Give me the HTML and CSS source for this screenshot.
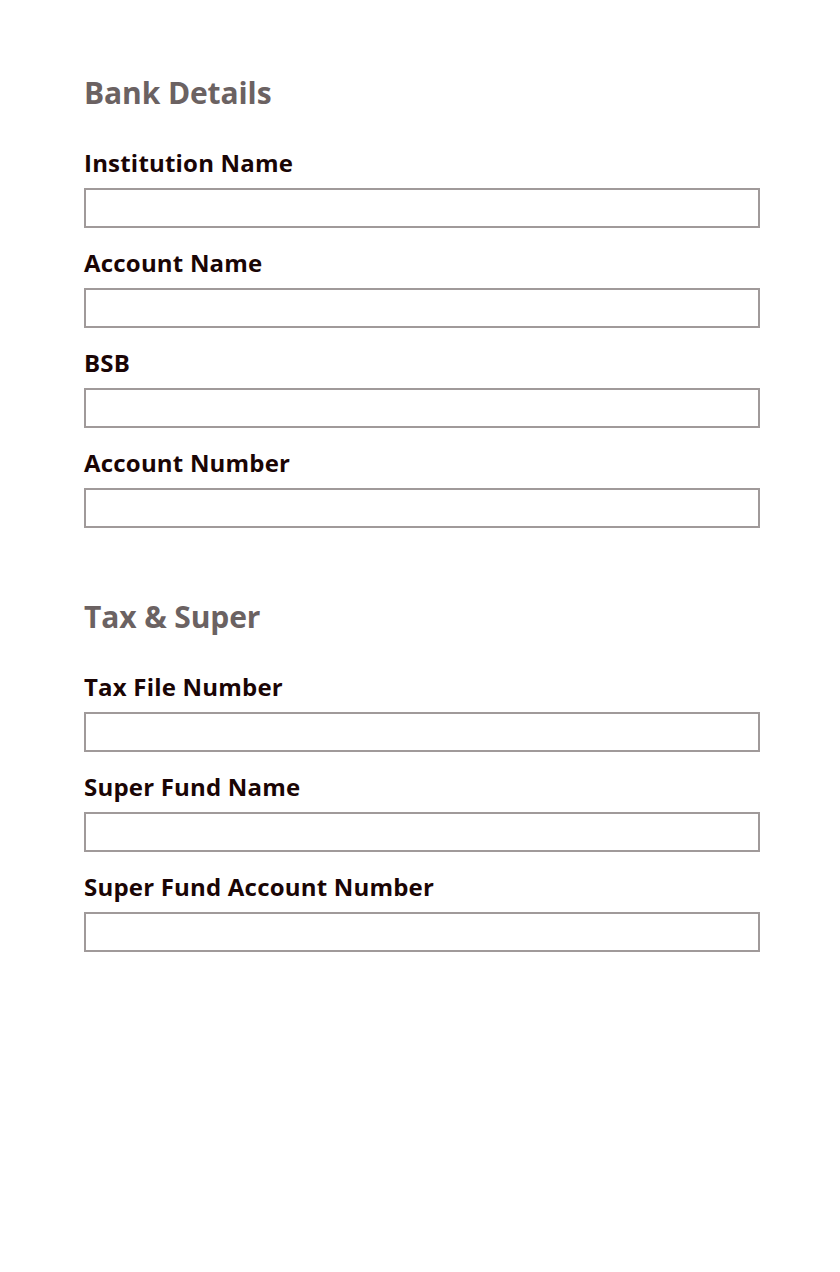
FILE: index.html
```html
<!DOCTYPE html>
<html lang="en">
<head>
    <meta charset="UTF-8">
    <title>Bank Details</title>
    <link rel="stylesheet" href="styles.css">
</head>
<body>
<div id="wrap">
    <div class="section">
        <h2>Bank Details</h2>
        <div class="field">
            <label for="institution">Institution Name</label>
            <input type="text" id="institution">
        </div>
        <div class="field">
            <label for="accName">Account Name</label>
            <input type="text" id="accName">
        </div>
        <div class="field">
            <label for="bsb">BSB</label>
            <input type="text" id="bsb">
        </div>
        <div class="field">
            <label for="accNumber">Account Number</label>
            <input type="text" id="accNumber">
        </div>
    </div>
    <div class="section">
        <h2>Tax &amp; Super</h2>
        <div class="field">
            <label for="tfn">Tax File Number</label>
            <input type="text" id="tfn">
        </div>
        <div class="field">
            <label for="superName">Super Fund Name</label>
            <input type="text" id="superName">
        </div>
        <div class="field">
            <label for="superNumber">Super Fund Account Number</label>
            <input type="text" id="superNumber">
        </div>
    </div>
</div>
</body>
</html>
```
FILE: styles.css
```css
* {
    margin: 0;
    padding: 0;
    box-sizing: border-box;
}

body {
    background: #fff;
    font-family: "Open Sans", "Noto Sans", sans-serif;
}

#wrap {
    width: 676px;
    margin-left: 84px;
    padding-top: 73px;
}

.section + .section {
    margin-top: 69px;
}

.section h2 {
    font-size: 30px;
    font-weight: 700;
    line-height: 40px;
    color: #6b6262;
    letter-spacing: -0.1px;
    margin-bottom: 33px;
}

.field {
    margin-bottom: 18px;
}

.field label {
    display: block;
    font-size: 24px;
    font-weight: 700;
    line-height: 34px;
    letter-spacing: 0.2px;
    color: #1a0505;
    margin-bottom: 8px;
}

.field input {
    display: block;
    width: 100%;
    height: 40px;
    border: 2px solid #a09a9a;
    background: #fff;
    outline: none;
    font-family: inherit;
    font-size: 20px;
    padding: 0 8px;
}
```
